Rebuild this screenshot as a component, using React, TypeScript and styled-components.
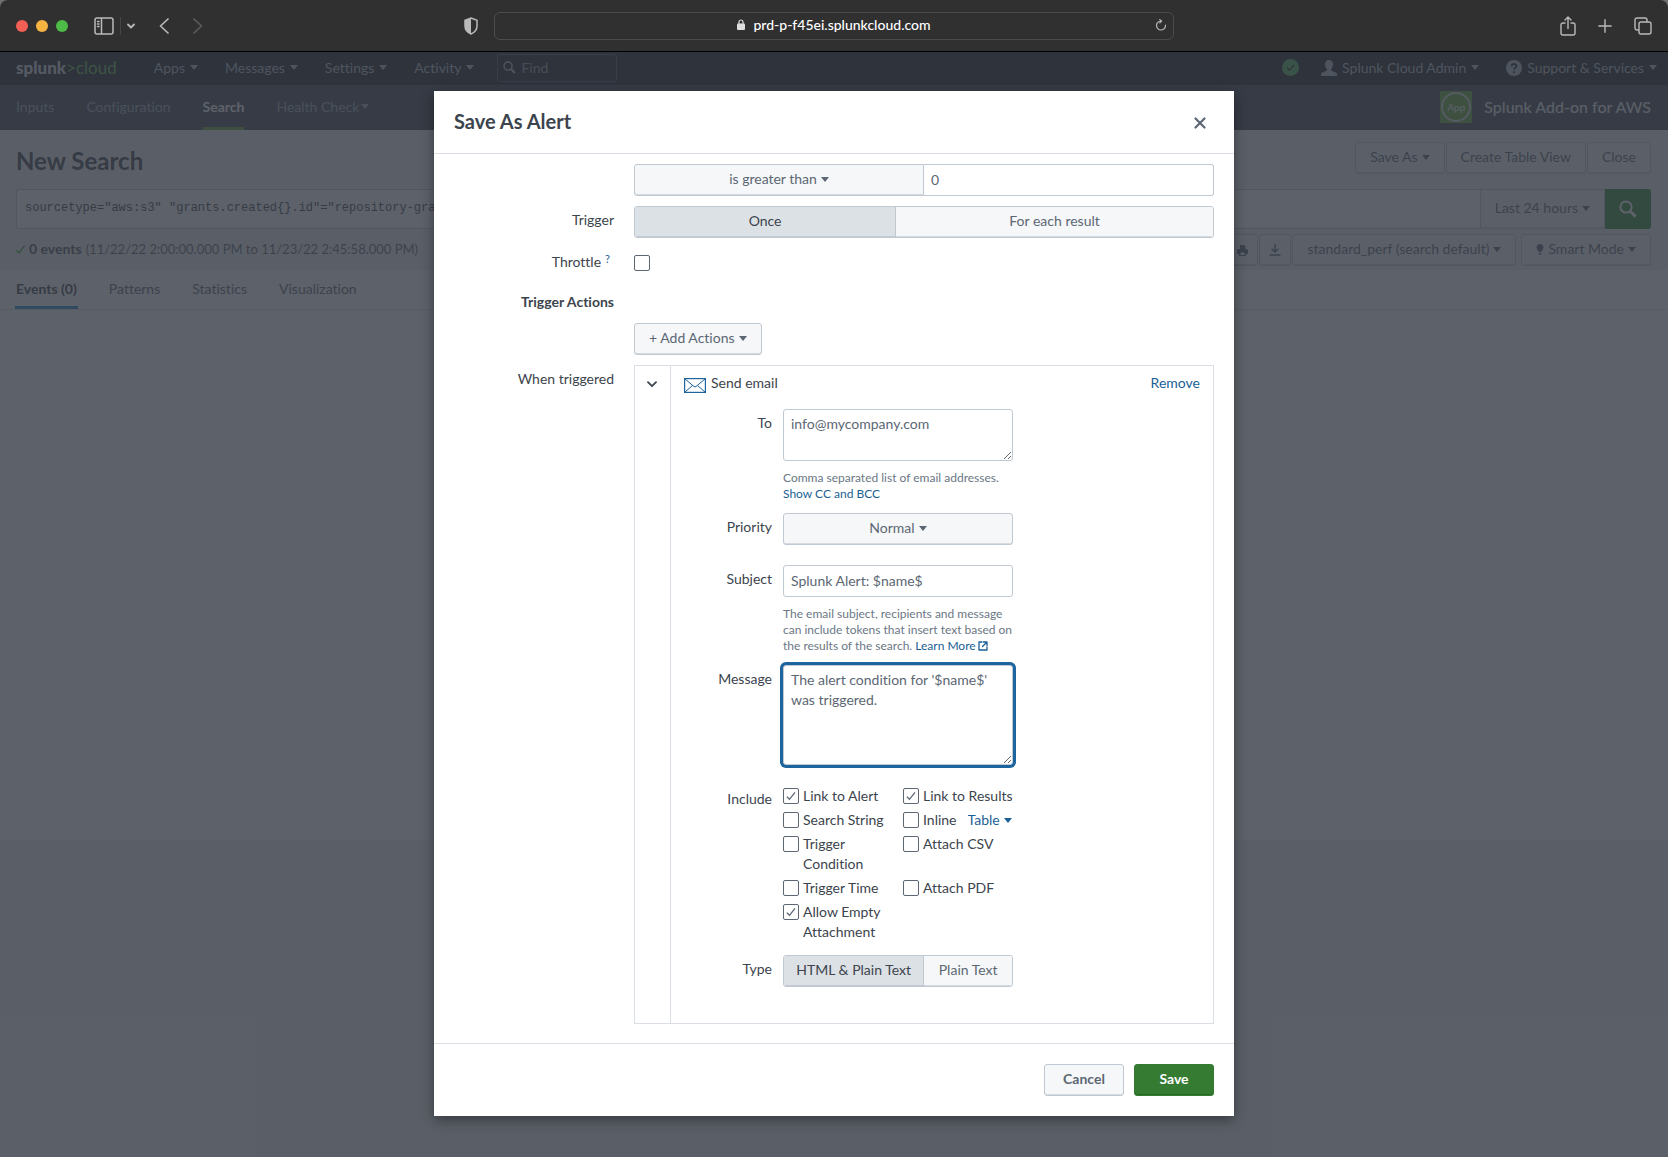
import React, { ReactNode, useId, useState } from "react";
import styled, { createGlobalStyle, css } from "styled-components";

const color = {
  ink: "#3c444d",
  inkSoft: "#5c6773",
  inkHelp: "#6b7785",
  link: "#1a5f96",
  line: "#d9dfe4",
  control: "#c0c8d1",
  controlBg: "#f5f7f9",
  active: "#dce1e5",
  page: "#f1f3f4",
};

const GlobalStyle = createGlobalStyle`
  *, *::before, *::after { box-sizing: border-box; }
  body {
    margin: 0;
    background: #6f6f6f;
    color: ${color.ink};
    font-family: Lato, "Liberation Sans", sans-serif;
    font-size: 14px;
    line-height: 20px;
    font-variant-ligatures: none;
  }
  button, input, select, textarea { font: inherit; color: inherit; margin: 0; }
  button { cursor: pointer; }
  a { color: ${color.link}; text-decoration: none; }
  svg { display: block; flex: none; }
`;

const bare = css`
  padding: 0;
  border: 0;
  background: none;
`;

/* ---------- Window ---------- */

const Window = styled.div`
  display: flex;
  flex-direction: column;
  min-height: 100vh;
`;

const Toolbar = styled.header`
  display: grid;
  grid-template-columns: 1fr minmax(200px, 680px) 1fr;
  align-items: center;
  gap: 16px;
  height: 52px;
  padding: 0 16px;
  background: #303030;
  border-bottom: 1px solid #000;
  border-radius: 8px 8px 0 0;
  color: #b9b9b9;
`;

const ToolGroup = styled.div<{ $gap: number }>`
  display: flex;
  align-items: center;
  gap: ${(p) => p.$gap}px;
`;

const Lights = styled(ToolGroup)`
  margin-right: 12px;
`;

const Light = styled.span<{ $fill: string }>`
  width: 12px;
  height: 12px;
  border-radius: 50%;
  background: ${(p) => p.$fill};
`;

const ToolButton = styled.button<{ $dim?: boolean }>`
  ${bare}
  display: flex;
  color: ${(p) => (p.$dim ? "#5c5c5c" : "inherit")};
`;

const ToolRule = styled.span`
  width: 1px;
  height: 18px;
  background: #454545;
`;

const Shield = styled(ToolButton)`
  margin-left: auto;
`;

const Address = styled.div`
  display: flex;
  align-items: center;
  height: 28px;
  padding: 0 6px 2px 18px;
  border: 1px solid #4c4c4c;
  border-radius: 6px;
`;

const AddressText = styled.div`
  flex: 1;
  display: flex;
  justify-content: center;
  align-items: center;
  gap: 8px;
  color: #fff;
  font-weight: 500;
`;

const ToolEnd = styled(ToolGroup)`
  justify-content: flex-end;
`;

/* ---------- Dimmed page ---------- */

const Stage = styled.div`
  position: relative;
  flex: 1;
  display: flex;
  flex-direction: column;
  background: ${color.page};
`;

const AppBar = styled.nav`
  display: flex;
  align-items: center;
  gap: 23px;
  height: 33px;
  padding: 0 11px 2px 16px;
  background: #171d21;
  color: #b4bcc4;
`;

const Logo = styled.a`
  margin-right: 14px;
  color: #d5dade;
  font-size: 17px;
  font-weight: 900;
`;

const LogoTail = styled.span`
  color: #65b845;
  font-weight: 400;
`;

const MenuButton = styled.button<{ $gap?: number }>`
  ${bare}
  display: flex;
  align-items: center;
  gap: ${(p) => p.$gap ?? 5}px;
  white-space: nowrap;
`;

const FindBox = styled.label`
  display: flex;
  align-items: center;
  gap: 5px;
  width: 120px;
  height: 28px;
  padding: 0 5px;
  border: 1px solid #4a535c;
  border-radius: 3px;
`;

const FindInput = styled.input`
  ${bare}
  width: 100%;
  min-width: 0;
  &::placeholder { color: #929ba4; opacity: 1; }
`;

const BarGroup = styled.div<{ $end?: boolean }>`
  display: flex;
  align-items: center;
  gap: 27px;
  margin-left: ${(p) => (p.$end ? "auto" : 0)};
`;

const NavBar = styled.nav`
  display: flex;
  align-items: stretch;
  gap: 32px;
  height: 45px;
  padding: 0 17px 0 16px;
  background: #3c444d;
`;

const NavItem = styled.a<{ $current?: boolean }>`
  display: flex;
  align-items: center;
  gap: 2px;
  padding-bottom: 2px;
  color: ${(p) => (p.$current ? "#fff" : "#a0a9b2")};
  font-weight: ${(p) => (p.$current ? 700 : 400)};
  box-shadow: ${(p) => (p.$current ? "inset 0 -3px #65a637" : "none")};
`;

const AppName = styled.div`
  display: flex;
  align-items: center;
  gap: 12px;
  margin-left: auto;
  padding-bottom: 1px;
  color: #eef1f3;
  font-size: 16px;
  font-weight: 500;
`;

const AppBadge = styled.span`
  display: grid;
  place-items: center;
  width: 32px;
  height: 32px;
  background: #65b034;
`;

const AppRing = styled.span`
  display: grid;
  place-items: center;
  width: 30px;
  height: 30px;
  border: 2px solid #d5dade;
  border-radius: 50%;
  font-size: 10px;
`;

const SearchHead = styled.section`
  display: flex;
  flex-direction: column;
  padding: 12px 17px 4px 16px;
`;

const Row = styled.div<{ $gap?: number }>`
  display: flex;
  align-items: center;
  gap: ${(p) => p.$gap ?? 0}px;
`;

const PageTitle = styled.h1`
  flex: 1;
  margin: 0;
  padding-top: 6px;
  font-size: 24px;
  line-height: 26px;
  font-weight: 700;
`;

const controlBox = css`
  display: flex;
  align-items: center;
  justify-content: center;
  gap: 4px;
  height: 32px;
  padding: 0 14px 2px;
  border: 1px solid ${color.control};
  border-radius: 3px;
  background: ${color.controlBg};
  box-shadow: inset 0 -1px rgba(120, 135, 150, 0.25);
  color: ${color.inkSoft};
  white-space: nowrap;
`;

const Button = styled.button`
  ${controlBox}
`;

const IconButton = styled.button`
  ${controlBox}
  width: 32px;
  padding: 0;
`;

const QueryRow = styled.form`
  display: flex;
  height: 40px;
  margin: 15px 0 5px;
`;

const QueryInput = styled.input`
  flex: 1;
  min-width: 0;
  padding: 0 8px 2px;
  border: 1px solid ${color.control};
  border-right: 0;
  border-radius: 3px 0 0 3px;
  background: #fff;
  font-family: "Liberation Mono", monospace;
  font-size: 12px;
`;

const RangeButton = styled.button`
  ${controlBox}
  height: 100%;
  border-radius: 0;
`;

const GoButton = styled.button`
  ${bare}
  display: grid;
  place-items: center;
  width: 46px;
  background: #318a38;
  border-radius: 0 3px 3px 0;
  color: #fff;
`;

const Summary = styled.div`
  flex: 1;
  display: flex;
  align-items: center;
  gap: 4px;
  padding-bottom: 2px;
  color: ${color.inkSoft};
  font-size: 13px;
`;

const Count = styled.strong`
  color: #4a535d;
  font-size: 14px;
`;

const Results = styled.section`
  min-height: 570px;
  background: #fff;
`;

const Tabs = styled.div`
  display: flex;
  gap: 30px;
  height: 40px;
  padding: 0 15px;
  border-bottom: 1px solid ${color.line};
`;

const Tab = styled.button<{ $current?: boolean }>`
  ${bare}
  padding: 0 1px 1px;
  font-weight: ${(p) => (p.$current ? 700 : 400)};
  color: ${(p) => (p.$current ? color.ink : color.inkSoft)};
  box-shadow: ${(p) => (p.$current ? "inset 0 -3px #1e8bd0" : "none")};
`;

/* ---------- Dialog ---------- */

const Backdrop = styled.div`
  position: absolute;
  inset: 0;
  display: flex;
  justify-content: center;
  align-items: flex-start;
  padding: 39px 20px;
  background: rgba(53, 58, 68, 0.8);
`;

const Dialog = styled.section`
  width: 100%;
  max-width: 800px;
  background: #fff;
  box-shadow: 0 4px 12px rgba(0, 0, 0, 0.4);
`;

const DialogHead = styled.header`
  display: flex;
  align-items: center;
  justify-content: space-between;
  height: 63px;
  padding: 0 28px 0 20px;
  border-bottom: 1px solid ${color.line};
`;

const DialogTitle = styled.h2`
  margin: 0;
  padding-bottom: 3px;
  font-size: 20px;
  line-height: 24px;
  font-weight: 700;
`;

const CloseButton = styled.button`
  ${bare}
  padding-top: 2px;
  color: ${color.inkSoft};
`;

const DialogBody = styled.div`
  padding: 10px 20px 19px;
`;

const DialogFoot = styled.footer`
  display: flex;
  justify-content: flex-end;
  gap: 10px;
  padding: 20px;
  border-top: 1px solid ${color.line};
`;

const FootButton = styled.button<{ $primary?: boolean }>`
  ${controlBox}
  width: 80px;
  padding: 0 0 2px;
  font-weight: 700;
  ${(p) =>
    p.$primary &&
    css`
      border-color: #357b31;
      background: #357b31;
      box-shadow: inset 0 -1px #2a6827;
      color: #fff;
    `}
`;

const Field = styled.div<{ $tight?: boolean }>`
  display: grid;
  grid-template-columns: 160px 1fr;
  column-gap: 20px;
  min-height: 30px;
  margin-bottom: ${(p) => (p.$tight ? 5 : 10)}px;
  &:last-child { margin-bottom: 0; }
`;

const Label = styled.label`
  line-height: 28px;
  text-align: right;
`;

const LabelText = styled.span`
  line-height: 28px;
  text-align: right;
`;

const HeadingText = styled.h3`
  margin: 0;
  font-size: 14px;
  line-height: 28px;
  font-weight: 700;
  text-align: right;
`;

const HelpMark = styled.a`
  margin: 0 4px;
  font-size: 11px;
  vertical-align: 4px;
  line-height: 12px;
`;

const Control = styled.div`
  grid-column: 2;
  display: flex;
  align-items: flex-start;
`;

const CheckControl = styled(Control)`
  align-items: center;
`;

const Compare = styled(Control)`
  display: grid;
  grid-template-columns: 1fr 1fr;
`;

const PickerBox = styled.span<{ $joined?: boolean; $wide?: boolean }>`
  ${controlBox}
  ${(p) => p.$joined && "border-radius: 3px 0 0 3px;"}
  ${(p) => p.$wide && "width: 100%;"}
`;

const PlainPicker = styled.span`
  display: flex;
  align-items: center;
  gap: 4px;
  margin-left: 11px;
  color: ${color.link};
`;

const Select = styled.select`
  ${bare}
  appearance: none;
  field-sizing: content;
`;

const TextInput = styled.input<{ $joined?: boolean }>`
  width: 100%;
  height: 32px;
  padding: 0 7px 2px;
  border: 1px solid ${color.control};
  border-left-width: ${(p) => (p.$joined ? 0 : 1)}px;
  border-radius: ${(p) => (p.$joined ? "0 3px 3px 0" : "3px")};
  background: #fff;
  color: ${color.inkSoft};
`;

const TextArea = styled.textarea<{ $focused?: boolean }>`
  display: block;
  width: 100%;
  height: ${(p) => (p.$focused ? 100 : 52)}px;
  padding: 4px 7px;
  border: 1px solid ${color.control};
  border-radius: 3px;
  outline: 0;
  resize: vertical;
  color: ${color.inkSoft};
  ${(p) => p.$focused && "box-shadow: 0 0 0 3px #1c659e;"}
`;

const Segments = styled.div<{ $columns: string }>`
  display: grid;
  grid-template-columns: ${(p) => p.$columns};
  width: 100%;
  height: 32px;
  border: 1px solid ${color.control};
  border-radius: 3px;
  overflow: hidden;
`;

const Segment = styled.label`
  display: grid;
  place-items: center;
  color: ${color.inkSoft};
  cursor: pointer;
  & + & { border-left: 1px solid ${color.control}; }
  &:has(input:checked) { color: ${color.ink}; }
`;

const SegmentRadio = styled.input`
  appearance: none;
  grid-area: 1 / 1;
  width: 100%;
  height: 100%;
  background: ${color.controlBg};
  box-shadow: inset 0 -1px rgba(120, 135, 150, 0.25);
  &:checked { background: ${color.active}; }
`;

const SegmentText = styled.span`
  grid-area: 1 / 1;
  z-index: 1;
  padding-bottom: 2px;
  pointer-events: none;
`;

const CheckMarkBox = styled.span`
  display: grid;
  place-items: center;
  flex: none;
  width: 16px;
  height: 16px;
  & > * { grid-area: 1 / 1; }
  & svg { pointer-events: none; visibility: hidden; }
  & input:checked + svg { visibility: visible; }
`;

const CheckInput = styled.input`
  appearance: none;
  width: 16px;
  height: 16px;
  border: 1px solid ${color.inkSoft};
  border-radius: 2px;
  background: #fff;
`;

const ActionPanel = styled.div`
  display: grid;
  grid-template-columns: 36px 1fr;
  width: 100%;
  border: 1px solid ${color.line};
`;

const PanelToggle = styled.button`
  ${bare}
  display: flex;
  justify-content: center;
  align-items: flex-start;
  padding: 15px 2px 0 0;
  border-right: 1px solid ${color.line};
`;

const PanelMain = styled.div`
  padding-bottom: 36px;
`;

const PanelHead = styled.div`
  display: flex;
  align-items: center;
  gap: 5px;
  height: 34px;
  margin-bottom: 9px;
  padding: 0 13px;
  & > svg { margin-top: 5px; }
`;

const RemoveLink = styled.a`
  margin-left: auto;
`;

const SubField = styled.div<{ $after: number }>`
  display: grid;
  grid-template-columns: 101px 230px;
  column-gap: 11px;
  margin-bottom: ${(p) => p.$after}px;
`;

const Help = styled.p`
  margin: 9px 0 0;
  color: ${color.inkHelp};
  font-size: 12px;
  line-height: 16px;
`;

const HelpLink = styled.a`
  & svg { display: inline-block; margin-left: 2px; vertical-align: -1px; }
`;

const Options = styled.div`
  display: grid;
  grid-template-columns: 110px 110px;
  gap: 4px 10px;
  padding-top: 1px;
`;

const Option = styled.div`
  display: flex;
  align-items: flex-start;
`;

const OptionBox = styled.span`
  padding: 2px 4px 0 0;
`;

/* ---------- Icons ---------- */

const Caret = () => (
  <svg width="8" height="5" viewBox="0 0 8 5" fill="currentColor" aria-hidden="true">
    <path d="M0 0h8L4 5z" />
  </svg>
);

const Tick = () => (
  <svg width="12" height="12" viewBox="0 0 12 12" fill="none" stroke={color.inkSoft} strokeWidth="1.300" aria-hidden="true">
    <path d="M1.800 6.600 4.500 9.300 10 2.400" />
  </svg>
);

const Line = ({ w, h, d, sw = 1.4 }: { w: number; h: number; d: string; sw?: number }) => (
  <svg width={w} height={h} viewBox={`0 0 ${w} ${h}`} fill="none" stroke="currentColor" strokeWidth={sw} strokeLinecap="round" strokeLinejoin="round" aria-hidden="true">
    <path d={d} />
  </svg>
);

const Magnifier = ({ size }: { size: number }) => (
  <svg width={size} height={size} viewBox="0 0 18 18" fill="none" stroke="currentColor" aria-hidden="true">
    <circle cx="7" cy="7" r="5.6" strokeWidth="2" />
    <path d="m11.4 11.4 5.2 5.2" strokeWidth="3" />
  </svg>
);

/* ---------- Composed controls ---------- */

const Menu = ({ children, gap }: { children: ReactNode; gap?: number }) => (
  <MenuButton type="button" aria-haspopup="menu" $gap={gap}>
    {children}
    <Caret />
  </MenuButton>
);

const Check = ({ id, on }: { id: string; on?: boolean }) => (
  <CheckMarkBox>
    <CheckInput type="checkbox" id={id} defaultChecked={on} />
    <Tick />
  </CheckMarkBox>
);

const CheckOption = ({ label, on, children }: { label: string; on?: boolean; children?: ReactNode }) => {
  const id = useId();
  return (
    <Option>
      <OptionBox>
        <Check id={id} on={on} />
      </OptionBox>
      <label htmlFor={id}>{label}</label>
      {children}
    </Option>
  );
};

const Choice = ({ name, options, columns, labelledBy }: { name: string; options: string[]; columns: string; labelledBy: string }) => (
  <Segments role="radiogroup" aria-labelledby={labelledBy} $columns={columns}>
    {options.map((o, i) => (
      <Segment key={o}>
        <SegmentRadio type="radio" name={name} defaultChecked={i === 0} />
        <SegmentText>{o}</SegmentText>
      </Segment>
    ))}
  </Segments>
);

const BrowserToolbar = () => (
  <Toolbar>
    <ToolGroup $gap={14}>
      <Lights $gap={8}>
        <Light $fill="#f35f54" />
        <Light $fill="#f8b440" />
        <Light $fill="#4dbb46" />
      </Lights>
      <ToolGroup $gap={6}>
        <ToolButton type="button" aria-label="Sidebar">
          <Line w={20} h={18} sw={1.5} d="M3 1h14a2 2 0 0 1 2 2v12a2 2 0 0 1-2 2H3a2 2 0 0 1-2-2V3a2 2 0 0 1 2-2zM7.5 1v16M3.5 4.5H5M3.5 7H5M3.5 9.500H5" />
        </ToolButton>
        <ToolRule />
        <ToolButton type="button" aria-label="Tab groups">
          <Line w={8} h={6} sw={1.8} d="M1 1.500 4 4.500 7 1.500" />
        </ToolButton>
      </ToolGroup>
      <ToolButton type="button" aria-label="Back">
        <Line w={30} h={16} sw={1.7} d="M19 1 11.500 8 19 15" />
      </ToolButton>
      <ToolButton type="button" aria-label="Forward" $dim>
        <Line w={10} h={16} sw={1.7} d="M1 1 8.500 8 1 15" />
      </ToolButton>
      <Shield type="button" aria-label="Privacy report">
        <svg width="14" height="18" viewBox="0 0 14 18" aria-hidden="true">
          <path d="M7 1 13 3.200V9c0 4-2.500 6.500-6 8-3.500-1.500-6-4-6-8V3.200z" fill="none" stroke="currentColor" strokeWidth="1.500" />
          <path d="M7 1v16c-3.500-1.500-6-4-6-8V3.200z" fill="currentColor" />
        </svg>
      </Shield>
    </ToolGroup>
    <Address>
      <AddressText>
        <svg width="8" height="11" viewBox="0 0 8 11" aria-hidden="true">
          <path d="M2 5V3a2 2 0 0 1 4 0v2" fill="none" stroke="#ddd" strokeWidth="1.200" />
          <rect y="4.500" width="8" height="6.500" rx="1" fill="#ddd" />
        </svg>
        prd-p-f45ei.splunkcloud.com
      </AddressText>
      <ToolButton type="button" aria-label="Reload">
        <Line w={12} h={12} sw={1.2} d="M10.500 6A4.500 4.500 0 1 1 6 2M4.800.6 6.600 2 4.800 3.800" />
      </ToolButton>
    </Address>
    <ToolEnd $gap={22}>
      <ToolButton type="button" aria-label="Share">
        <Line w={16} h={20} d="M5 7H3a2 2 0 0 0-2 2v8a2 2 0 0 0 2 2h10a2 2 0 0 0 2-2V9a2 2 0 0 0-2-2h-2M8 12.500V1M5 4l3-3 3 3" />
      </ToolButton>
      <ToolButton type="button" aria-label="New tab">
        <Line w={14} h={14} d="M7 .8v12.400M.8 7h12.400" />
      </ToolButton>
      <ToolButton type="button" aria-label="Tabs">
        <Line w={18} h={18} d="M5 13H3a2 2 0 0 1-2-2V3a2 2 0 0 1 2-2h8a2 2 0 0 1 2 2v2M7 5h8a2 2 0 0 1 2 2v8a2 2 0 0 1-2 2H7a2 2 0 0 1-2-2V7a2 2 0 0 1 2-2z" />
      </ToolButton>
    </ToolEnd>
  </Toolbar>
);

const SplunkBars = () => (
  <>
    <AppBar>
      <Logo href="#">
        splunk<LogoTail>&gt;cloud</LogoTail>
      </Logo>
      <BarGroup>
        {["Apps", "Messages", "Settings", "Activity"].map((m) => (
          <Menu key={m}>{m}</Menu>
        ))}
      </BarGroup>
      <FindBox>
        <Magnifier size={13} />
        <FindInput placeholder="Find" aria-label="Find" />
      </FindBox>
      <BarGroup $end>
        <Row $gap={22}>
          <svg width="17" height="17" viewBox="0 0 17 17" aria-hidden="true">
            <circle cx="8.500" cy="8.500" r="8.500" fill="#53b85c" />
            <path d="m5 8.800 2.500 2.400 4.500-5.200" fill="none" stroke="#171d21" strokeWidth="1.200" />
          </svg>
          <Menu>
            <svg width="16" height="16" viewBox="0 0 16 16" fill="currentColor" aria-hidden="true">
              <path d="M8 0c2.600 0 4 1.800 4 4.300 0 2-.8 3.900-2 4.900v1.200l4.600 2c.9.400 1.400 1.100 1.400 2V16H0v-1.600c0-.9.500-1.600 1.400-2l4.600-2V9.200C4.800 8.200 4 6.300 4 4.300 4 1.800 5.400 0 8 0z" />
            </svg>
            Splunk Cloud Admin
          </Menu>
        </Row>
        <Menu>
          <svg width="16" height="16" viewBox="0 0 16 16" aria-hidden="true">
            <circle cx="8" cy="8" r="8" fill="currentColor" />
            <path d="M5.600 6.300C5.700 4.800 6.600 4 8 4s2.400.8 2.400 2.100C10.400 7.800 8 7.900 8 9.800M8 11.200V13" fill="none" stroke="#171d21" strokeWidth="1.800" />
          </svg>
          Support &amp; Services
        </Menu>
      </BarGroup>
    </AppBar>
    <NavBar>
      <NavItem href="#">Inputs</NavItem>
      <NavItem href="#">Configuration</NavItem>
      <NavItem href="#" $current>Search</NavItem>
      <NavItem href="#">
        Health Check
        <Caret />
      </NavItem>
      <AppName>
        <AppBadge>
          <AppRing>App</AppRing>
        </AppBadge>
        Splunk Add-on for AWS
      </AppName>
    </NavBar>
  </>
);

const SearchPage = () => (
  <>
    <SearchHead>
      <Row $gap={1}>
        <PageTitle>New Search</PageTitle>
        <Button type="button" aria-haspopup="menu">
          Save As
          <Caret />
        </Button>
        <Button type="button">Create Table View</Button>
        <Button type="button">Close</Button>
      </Row>
      <QueryRow>
        <QueryInput aria-label="Search query" defaultValue={'sourcetype="aws:s3" "grants.created{}.id"="repository-grant'} />
        <RangeButton type="button">
          Last 24 hours
          <Caret />
        </RangeButton>
        <GoButton type="button" aria-label="Search">
          <Magnifier size={18} />
        </GoButton>
      </QueryRow>
      <Row $gap={5}>
        <Summary>
          <svg width="9" height="9" viewBox="0 0 12 12" fill="none" stroke="#2fa02f" strokeWidth="1.800" aria-hidden="true">
            <path d="M.5 7 4 10.600 11.500 1" />
          </svg>
          <Count>0 events</Count>
          (11/22/22 2:00:00.000 PM to 11/23/22 2:45:58.000 PM)
        </Summary>
        <Row $gap={1}>
          <IconButton type="button" aria-label="Print">
            <svg width="11" height="11" viewBox="0 0 11 11" fill="currentColor" aria-hidden="true">
              <path d="M3 0h4l1.500 1.500V4h1A1.500 1.500 0 0 1 11 5.500V9H9v2H2V9H0V5.500A1.500 1.500 0 0 1 1.500 4H3zM3.500 7.500V10h4V7.500z" fillRule="evenodd" />
            </svg>
          </IconButton>
          <IconButton type="button" aria-label="Export">
            <Line w={12} h={12} sw={1.5} d="M6 .8v7M3 5l3 3 3-3M1 11h10" />
          </IconButton>
          <PickerBox>
            <Select aria-label="Workload pool" defaultValue="p">
              <option value="p">standard_perf (search default)</option>
            </Select>
            <Caret />
          </PickerBox>
        </Row>
        <PickerBox>
          <svg width="8" height="11" viewBox="0 0 8 11" fill="currentColor" aria-hidden="true">
            <path d="M4 0a3.500 3.500 0 0 1 3.500 3.500C7.500 5 6 6 5.500 8h-3C2 6 .5 5 .5 3.500A3.500 3.500 0 0 1 4 0zM2.700 9h2.600v1L4 11 2.700 10z" />
          </svg>
          <Select aria-label="Search mode" defaultValue="s">
            <option value="s">Smart Mode</option>
          </Select>
          <Caret />
        </PickerBox>
      </Row>
    </SearchHead>
    <Results>
      <Tabs role="tablist">
        {["Events (0)", "Patterns", "Statistics", "Visualization"].map((t, i) => (
          <Tab key={t} role="tab" type="button" aria-selected={i === 0} $current={i === 0}>
            {t}
          </Tab>
        ))}
      </Tabs>
    </Results>
  </>
);

const EmailAction = () => {
  const [open, setOpen] = useState(true);
  return (
    <ActionPanel>
      <PanelToggle type="button" aria-label="Toggle action" aria-expanded={open} onClick={() => setOpen(!open)}>
        <Line w={10} h={7} sw={1.8} d="M1 1.200 5 5.200 9 1.200" />
      </PanelToggle>
      <PanelMain>
        <PanelHead>
          <svg width="22" height="15" viewBox="0 0 22 15" fill="none" stroke="#1c659e" aria-hidden="true">
            <rect x=".6" y=".6" width="20.800" height="13.800" strokeWidth="1.200" />
            <path d="m1 1 9 7.500a1.600 1.600 0 0 0 2 0L21 1M1 14l7.500-6.500M21 14l-7.500-6.500" />
          </svg>
          Send email
          <RemoveLink href="#">Remove</RemoveLink>
        </PanelHead>
        {open && (
          <>
            <SubField $after={11}>
              <Label htmlFor="to">To</Label>
              <div>
                <TextArea id="to" defaultValue="info@mycompany.com" />
                <Help>
                  Comma separated list of email addresses.
                  <br />
                  <a href="#">Show CC and BCC</a>
                </Help>
              </div>
            </SubField>
            <SubField $after={20}>
              <Label htmlFor="priority">Priority</Label>
              <PickerBox $wide>
                <Select id="priority" defaultValue="n">
                  <option value="n">Normal</option>
                </Select>
                <Caret />
              </PickerBox>
            </SubField>
            <SubField $after={11}>
              <Label htmlFor="subject">Subject</Label>
              <div>
                <TextInput id="subject" defaultValue="Splunk Alert: $name$" />
                <Help>
                  The email subject, recipients and message can include tokens that insert text based on the results of the search.{" "}
                  <HelpLink href="#">
                    Learn More
                    <Line w={10} h={10} sw={1.3} d="M4 1H1v8h8V6M5.500 1H9v3.500M9 1 4.500 5.500" />
                  </HelpLink>
                </Help>
              </div>
            </SubField>
            <SubField $after={20}>
              <Label htmlFor="message">Message</Label>
              <TextArea id="message" $focused defaultValue="The alert condition for '$name$' was triggered." />
            </SubField>
            <SubField $after={13}>
              <LabelText>Include</LabelText>
              <Options>
                <CheckOption label="Link to Alert" on />
                <CheckOption label="Link to Results" on />
                <CheckOption label="Search String" />
                <CheckOption label="Inline">
                  <PlainPicker>
                    <Select aria-label="Inline format" defaultValue="t">
                      <option value="t">Table</option>
                    </Select>
                    <Caret />
                  </PlainPicker>
                </CheckOption>
                <CheckOption label="Trigger Condition" />
                <CheckOption label="Attach CSV" />
                <CheckOption label="Trigger Time" />
                <CheckOption label="Attach PDF" />
                <CheckOption label="Allow Empty Attachment" on />
              </Options>
            </SubField>
            <SubField $after={0}>
              <LabelText id="type">Type</LabelText>
              <Choice name="type" labelledBy="type" columns="11fr 7fr" options={["HTML & Plain Text", "Plain Text"]} />
            </SubField>
          </>
        )}
      </PanelMain>
    </ActionPanel>
  );
};

const SaveAsAlert = () => (
  <Dialog role="dialog" aria-labelledby="dialog-title">
    <DialogHead>
      <DialogTitle id="dialog-title">Save As Alert</DialogTitle>
      <CloseButton type="button" aria-label="Close dialog">
        <Line w={12} h={12} sw={2.2} d="M1.500 1.500l9 9M10.500 1.500l-9 9" />
      </CloseButton>
    </DialogHead>
    <DialogBody>
      <Field>
        <Compare>
          <PickerBox $joined>
            <Select aria-label="Comparison" defaultValue="gt">
              <option value="gt">is greater than</option>
            </Select>
            <Caret />
          </PickerBox>
          <TextInput $joined aria-label="Threshold" defaultValue="0" />
        </Compare>
      </Field>
      <Field>
        <LabelText id="trigger">Trigger</LabelText>
        <Choice name="trigger" labelledBy="trigger" columns="9fr 11fr" options={["Once", "For each result"]} />
      </Field>
      <Field>
        <Label htmlFor="throttle">
          Throttle<HelpMark href="#">?</HelpMark>
        </Label>
        <CheckControl>
          <Check id="throttle" />
        </CheckControl>
      </Field>
      <Field $tight>
        <HeadingText>Trigger Actions</HeadingText>
      </Field>
      <Field>
        <Control>
          <Button type="button" aria-haspopup="menu">
            + Add Actions
            <Caret />
          </Button>
        </Control>
      </Field>
      <Field>
        <LabelText>When triggered</LabelText>
        <EmailAction />
      </Field>
    </DialogBody>
    <DialogFoot>
      <FootButton type="button">Cancel</FootButton>
      <FootButton type="button" $primary>Save</FootButton>
    </DialogFoot>
  </Dialog>
);

export default function App() {
  return (
    <Window>
      <GlobalStyle />
      <BrowserToolbar />
      <Stage>
        <SplunkBars />
        <SearchPage />
        <Backdrop>
          <SaveAsAlert />
        </Backdrop>
      </Stage>
    </Window>
  );
}
